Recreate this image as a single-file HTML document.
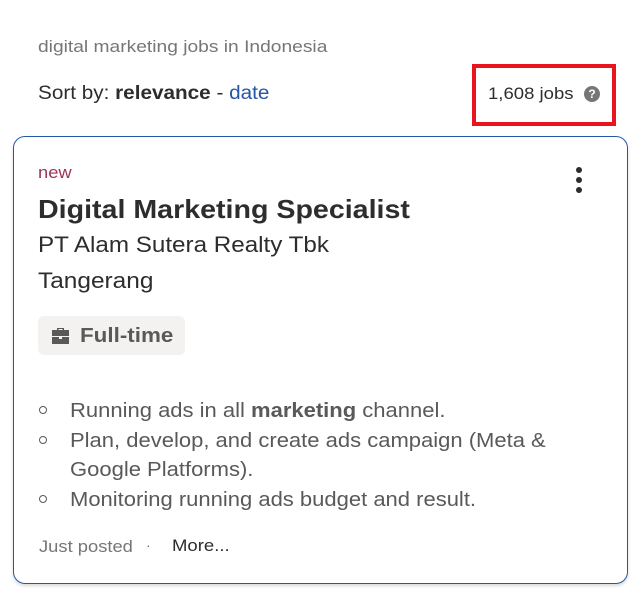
<!DOCTYPE html>
<html><head><style>
body{margin:0;width:642px;height:594px;background:#fff;font-family:"Liberation Sans",Arial,sans-serif;position:relative;overflow:hidden}
.a{position:absolute;white-space:nowrap;transform-origin:0 0}
</style></head><body>
<div class="a" style="left:38px;top:37px;font-size:17px;color:#767676;transform:scaleX(1.13)">digital marketing jobs in Indonesia</div>
<div class="a" style="left:38px;top:83px;font-size:19px;color:#2d2d2d;transform:scaleX(1.09)">Sort by: <b>relevance</b> - <span style="color:#2557a7">date</span></div>
<div class="a" style="left:472px;top:64px;width:136px;height:54px;border:4px solid #e8141e"></div>
<div class="a" style="left:488px;top:84px;font-size:17px;color:#2d2d2d;transform:scaleX(1.09)">1,608 jobs</div>
<div class="a" style="left:584px;top:86px;width:16px;height:16px;border-radius:50%;background:#767676;color:#fff;font-size:12px;font-weight:bold;text-align:center;line-height:16px">?</div>
<div class="a" style="left:13px;top:136px;width:613px;height:446px;border:1px solid #2557a7;border-radius:12px;box-shadow:0 2px 3px rgba(0,0,0,.15)"></div>
<div class="a" style="left:38px;top:163px;font-size:17px;color:#a0355a;transform:scaleX(1.08)">new</div>
<div class="a" style="left:576px;top:167px;width:6px">
<div style="width:6px;height:6px;border-radius:50%;background:#2d2d2d;margin-bottom:4px"></div>
<div style="width:6px;height:6px;border-radius:50%;background:#2d2d2d;margin-bottom:4px"></div>
<div style="width:6px;height:6px;border-radius:50%;background:#2d2d2d"></div></div>
<div class="a" style="left:38px;top:194px;font-size:26px;font-weight:bold;color:#2d2d2d;transform:scaleX(1.1)">Digital Marketing Specialist</div>
<div class="a" style="left:38px;top:232px;font-size:22px;color:#2d2d2d;transform:scaleX(1.1)">PT Alam Sutera Realty Tbk</div>
<div class="a" style="left:38px;top:268px;font-size:22px;color:#2d2d2d;transform:scaleX(1.11)">Tangerang</div>
<div class="a" style="left:38px;top:316px;width:147px;height:39px;background:#f3f2f1;border-radius:6px"></div>
<svg class="a" style="left:51px;top:327px" width="19" height="18" viewBox="0 0 19 18"><path d="M6 3V1h7v2h5v6H1V3zM7.5 2v1h4V2z" fill="#595959"/><path d="M1 10h7v2h3v-2h7v7H1z" fill="#595959"/></svg>
<div class="a" style="left:80px;top:325px;font-size:20px;font-weight:bold;color:#595959;transform:scaleX(1.12)">Full-time</div>
<div class="a" style="left:70px;top:397px;font-size:20px;color:#595959;line-height:29.5px;transform:scaleX(1.1)">
Running ads in all <b>marketing</b> channel.<br>Plan, develop, and create ads campaign (Meta &amp;<br>Google Platforms).<br>Monitoring running ads budget and result.</div>
<div class="a" style="left:39px;top:406px;width:6px;height:6px;border:1.5px solid #595959;border-radius:50%"></div>
<div class="a" style="left:39px;top:436px;width:6px;height:6px;border:1.5px solid #595959;border-radius:50%"></div>
<div class="a" style="left:39px;top:495px;width:6px;height:6px;border:1.5px solid #595959;border-radius:50%"></div>
<div class="a" style="left:39px;top:537px;font-size:17px;color:#767676;transform:scaleX(1.08)">Just posted</div>
<div class="a" style="left:146px;top:537px;font-size:14px;color:#767676">·</div>
<div class="a" style="left:172px;top:536px;font-size:17px;color:#2d2d2d;transform:scaleX(1.09)">More...</div>
</body></html>
